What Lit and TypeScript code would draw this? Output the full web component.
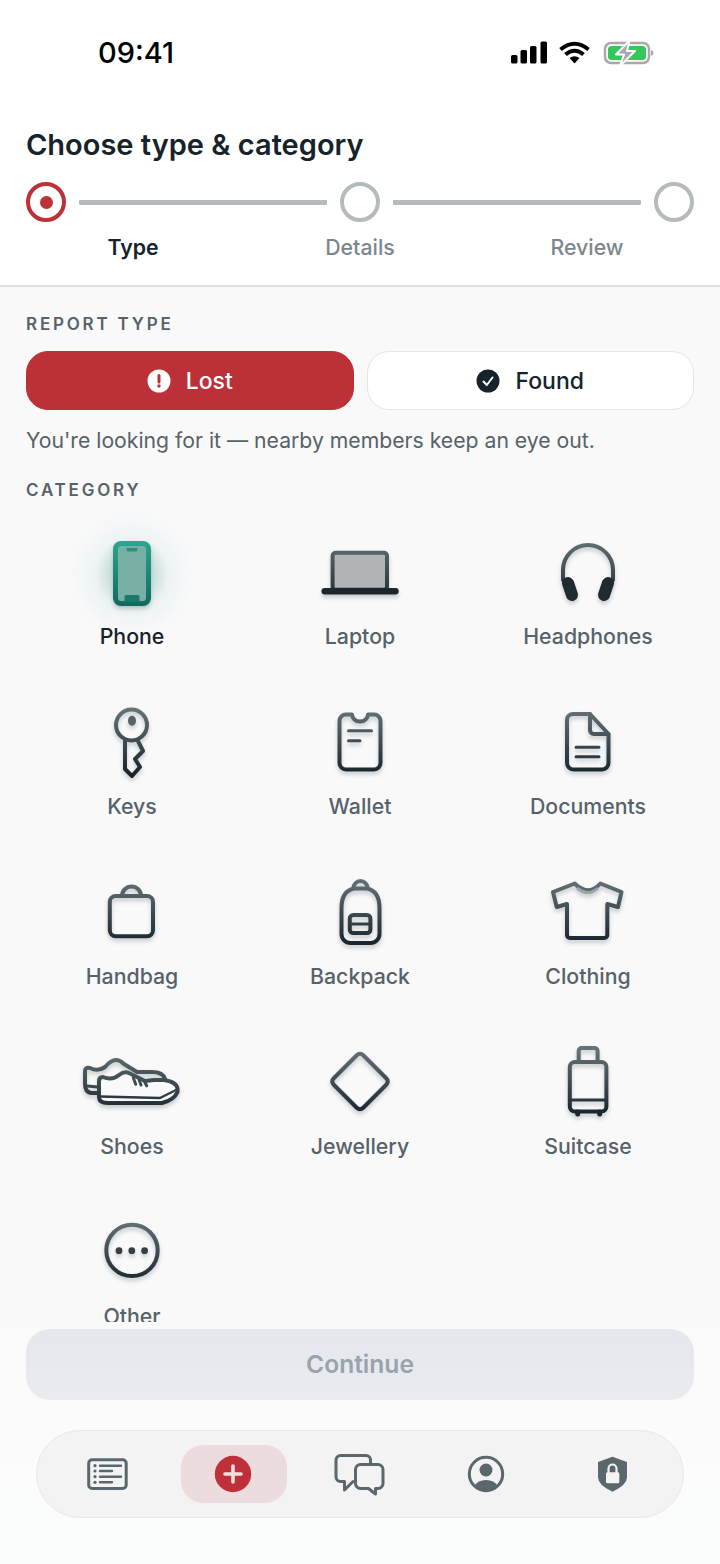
import { LitElement, html, css, svg } from 'lit';
import { customElement } from 'lit/decorators.js';

const STROKE = 'url(#ink)';

const line = (d: string, w = 4) =>
  svg`<path d=${d} fill="none" stroke=${STROKE} stroke-width=${w} stroke-linecap="round" stroke-linejoin="round"/>`;

// every icon is a 100x100 box, its middle sits on the middle of the cell
const ICONS: Record<string, unknown> = {
  phone: svg`
    <circle cx="50" cy="50" r="66" fill="url(#glow)"/>
    <rect x="33.5" y="19.5" width="33" height="60" rx="5.5" fill="#78b0a5" stroke="url(#teal)" stroke-width="5"/>
    <path d="M44.5 24h11v1.5a2 2 0 0 1-2 2h-7a2 2 0 0 1-2-2z" fill="#2a8f80"/>
    <path d="M44 71h12a1.5 1.5 0 0 1 1.5 1.5v5.5h-15v-5.5a1.5 1.5 0 0 1 1.5-1.5z" fill="#1a7a6c"/>`,
  laptop: svg`
    <rect x="22.6" y="28.7" width="54.4" height="37" rx="3" fill="#b0b4b7" stroke=${STROKE} stroke-width="4"/>
    <rect x="11.5" y="64" width="77.2" height="6.5" rx="3.2" fill="#1b272d"/>`,
  headphones: svg`
    ${line('M25 56V46a25 25 0 0 1 50 0v10')}
    <path d="M30 59l4 12M70 59l-4 12" stroke="#1f2b31" stroke-width="12" stroke-linecap="round"/>`,
  keys: svg`
    <circle cx="49.5" cy="31" r="15.5" fill="none" stroke=${STROKE} stroke-width="4"/>
    <ellipse cx="50" cy="26.7" rx="4" ry="5" fill="#55626a"/>
    ${line('M43 47V75L50 82L58 73L53 65L61 57L56 47')}`,
  wallet: svg`
    ${line('M36 20.5H42a8 7 0 0 0 16 0H64a6.5 6.5 0 0 1 6.5 6.5V69a6.5 6.5 0 0 1-6.5 6.5H36a6.5 6.5 0 0 1-6.5-6.5V27a6.5 6.5 0 0 1 6.5-6.5Z')}
    ${line('M38.5 36.7H61.5M38.5 46.7H50', 3)}`,
  documents: svg`
    ${line('M35 20H52L70.5 40V69a6.5 6.5 0 0 1-6.5 6.5H35.5a6.5 6.5 0 0 1-6.5-6.5V26a6 6 0 0 1 6-6Z')}
    ${line('M52 20V36a4 4 0 0 0 4 4H70.5')}
    ${line('M38 53.3H61M38 62.7H61', 3)}`,
  handbag: svg`
    <rect x="27.8" y="32" width="43.2" height="40.3" rx="6" fill="none" stroke=${STROKE} stroke-width="4"/>
    ${line('M40 32a9.5 9.5 0 0 1 19 0')}`,
  backpack: svg`
    ${line('M31.5 44Q31.5 27 44 24.5H57Q69.5 27 69.5 44V70a9 9 0 0 1-9 9H40.5a9 9 0 0 1-9-9Z')}
    ${line('M43.5 24a7 7 0 0 1 14 0', 4)}
    <rect x="39.8" y="51" width="20.6" height="18" rx="3.5" fill="none" stroke=${STROKE} stroke-width="4"/>
    ${line('M40 60H60', 3)}`,
  clothing: svg`
    ${line('M36.7 19.5Q50 33 62.4 19.5L83.5 28L80 43L69.3 40V71a3 3 0 0 1-3 3H32a3 3 0 0 1-3-3V40L18.7 43L15 28Z')}
    <path d="M39 24Q50 33 60 24" fill="none" stroke="#9aa3a8" stroke-width="3"/>`,
  shoes: svg`
    ${line('M16 59H9Q3 58 3 50V37Q3 33 8 34Q16 38 23 33Q29 26 34 26Q38 26 42 30L55 38H70Q81 38 83 45')}
    ${line('M5 52L16 53', 3)}
    <path d="M17 47Q17 43 21 43Q30 47 37 41Q42 37 47 39L63 47L72 46H82Q95 48 95.5 55V58Q92 66 80 69H26Q17 69 17 63Z" fill="#f9f9fa" stroke=${STROKE} stroke-width="4" stroke-linejoin="round"/>
    ${line('M18 62.5L78 64L95 55.5', 2.5)}
    ${line('M51.3 43.7L53.7 50.3M56.8 45L59 51M62 46.5L64.7 51.7', 3)}`,
  jewellery: svg`
    ${line('M46.5 21.5Q50 18 53.5 21.5L76 44Q79.5 47.5 76 51L53.5 73.5Q50 77 46.5 73.5L24 51Q20.5 47.5 24 44Z')}`,
  suitcase: svg`
    <rect x="31.8" y="28" width="36.6" height="49.5" rx="5" fill="none" stroke=${STROKE} stroke-width="4"/>
    ${line('M40.7 28V17a3 3 0 0 1 3-3H56.6a3 3 0 0 1 3 3V28')}
    ${line('M32 66H68', 3)}
    <path d="M39.7 78v2M61.7 78v2" stroke="#1b272d" stroke-width="5" stroke-linecap="round"/>`,
  other: svg`
    <circle cx="50" cy="46.4" r="25.7" fill="none" stroke=${STROKE} stroke-width="4"/>
    <circle cx="37" cy="46.7" r="3.4" fill="#343f46"/>
    <circle cx="49.8" cy="46.7" r="3.4" fill="#343f46"/>
    <circle cx="62.6" cy="46.7" r="3.4" fill="#343f46"/>`,
};

const CATEGORIES = [
  ['phone', 'Phone'], ['laptop', 'Laptop'], ['headphones', 'Headphones'],
  ['keys', 'Keys'], ['wallet', 'Wallet'], ['documents', 'Documents'],
  ['handbag', 'Handbag'], ['backpack', 'Backpack'], ['clothing', 'Clothing'],
  ['shoes', 'Shoes'], ['jewellery', 'Jewellery'], ['suitcase', 'Suitcase'],
  ['other', 'Other'],
];

const NAV = [
  svg`<rect x="10.7" y="15.8" width="37.5" height="28.7" rx="3.5" fill="none" stroke="#5a676d" stroke-width="3"/>
    <path d="M22 21.7H43M22 27H34M22 32.7H43M22 38.3H34" stroke="#5a676d" stroke-width="2.4" stroke-linecap="round"/>
    <circle cx="17" cy="21.7" r="1.6" fill="#5a676d"/><circle cx="17" cy="27" r="1.6" fill="#5a676d"/>
    <circle cx="17" cy="32.7" r="1.6" fill="#5a676d"/><circle cx="17" cy="38.3" r="1.6" fill="#5a676d"/>`,
  svg`<circle cx="29" cy="30" r="18.2" fill="#c0303a"/>
    <path d="M29 22V38M21 30H37" stroke="#f0dfe0" stroke-width="3.6" stroke-linecap="round"/>`,
  svg`<path d="M40.5 19V16a4.5 4.5 0 0 0-4.5-4.5H10.5A4.5 4.5 0 0 0 6 16V33a4.5 4.5 0 0 0 4.5 4.5H14.5V46L23 37.5" fill="none" stroke="#5a676d" stroke-width="3" stroke-linejoin="round" stroke-linecap="round"/>
    <path d="M30.5 20.5H48a5 5 0 0 1 5 5V39.5a5 5 0 0 1-5 5H45.5V50L38.5 44.5H30.5a5 5 0 0 1-5-5V25.5a5 5 0 0 1 5-5Z" fill="none" stroke="#5a676d" stroke-width="3" stroke-linejoin="round"/>`,
  svg`<circle cx="30" cy="30" r="16.7" fill="none" stroke="#5a676d" stroke-width="3"/>
    <ellipse cx="30" cy="26" rx="6.5" ry="6.5" fill="#5a676d"/>
    <path d="M18 42Q22 36 30 36Q38 36 42 42A16.7 16.7 0 0 1 18 42Z" fill="#5a676d"/>`,
  svg`<path d="M30.5 12.7L45 18V33Q45 41 30.5 47.7Q16 41 16 33V18Z" fill="#5a676d"/>
    <rect x="24" y="28.2" width="13.3" height="11" rx="1.5" fill="#f3f3f4"/>
    <path d="M26.5 29V24.5a4 4 0 0 1 8 0V29" fill="none" stroke="#f3f3f4" stroke-width="2.2"/>`,
];

@customElement('app-root')
export class AppRoot extends LitElement {
  static styles = css`
    :host {
      display: flex;
      flex-direction: column;
      width: 720px;
      height: 1564px;
      background: #f9f9fa;
      font-family: Inter, "Liberation Sans", sans-serif;
      color: #17232a;
      overflow: hidden;
    }
    .defs { display: block; width: 0; height: 0; }

    /* status bar */
    .status {
      display: flex;
      align-items: center;
      justify-content: space-between;
      height: 106px;
      padding: 0 66px 0 98px;
      box-sizing: border-box;
    }
    .time { font-size: 29px; font-weight: 500; color: #000; padding-bottom: 2px; }
    .status svg { display: block; }

    /* header */
    .head {
      background: #fff;
      border-bottom: 2px solid #dcdfe1;
    }
    .head-in { padding: 21px 26px 24px; }
    h1 { margin: 0; font-size: 29px; line-height: 36px; font-weight: 600; }
    .stepper { display: flex; align-items: center; margin-top: 19px; }
    .dot {
      width: 40px;
      height: 40px;
      box-sizing: border-box;
      border: 4px solid #b5bbbd;
      border-radius: 50%;
      display: flex;
      align-items: center;
      justify-content: center;
      flex: none;
    }
    .dot.on { border-color: #bc3037; }
    .dot.on::after { content: ""; width: 13px; height: 13px; border-radius: 50%; background: #bc3037; }
    .bar { flex: 1; height: 5px; margin: 0 13px; background: #b5bbbd; border-radius: 1px; }
    .steps {
      display: grid;
      grid-template-columns: repeat(3, 1fr);
      margin: 12px -6.5px 1px;
      text-align: center;
      font-size: 21.3px;
      line-height: 26px;
      font-weight: 500;
      color: #7c878c;
    }
    .steps .on { color: #17232a; font-weight: 600; }

    /* scrolling part */
    .scroll { flex: 1; min-height: 0; overflow: hidden; padding: 27px 26px 0; }
    .caps {
      font-size: 17px;
      line-height: 20px;
      font-weight: 600;
      letter-spacing: 2.8px;
      color: #566269;
    }
    .types { display: grid; grid-template-columns: 1fr 1fr; gap: 13px; margin-top: 17px; }
    .type {
      display: flex;
      align-items: center;
      justify-content: center;
      gap: 15px;
      height: 59px;
      box-sizing: border-box;
      border-radius: 22px;
      font-size: 23px;
      font-weight: 500;
      background: #fff;
      border: 1.5px solid #e4e5e6;
    }
    .type.lost { background: #bc3037; border-color: #bc3037; color: #fff; }
    .hint { margin: 16px 0 0; font-size: 21.2px; line-height: 28px; color: #566269; }
    .cat { margin-top: 26px; }
    .grid {
      display: grid;
      grid-template-columns: repeat(3, 1fr);
      row-gap: 45px;
      margin: 24px -8px 0;
    }
    .cell {
      display: flex;
      flex-direction: column;
      align-items: center;
      font-size: 21.3px;
      line-height: 26px;
      font-weight: 500;
      color: #566269;
    }
    .cell.on { color: #17232a; }
    .cell svg {
      display: block;
      overflow: visible;
      margin-bottom: -1px;
      filter: drop-shadow(0 3px 2px rgba(20, 30, 35, 0.22));
    }

    /* footer */
    .foot { padding: 7px 26px 46px; background: linear-gradient(#fafafa, #fbfcfc); }
    .continue {
      display: flex;
      align-items: center;
      justify-content: center;
      height: 71px;
      box-sizing: border-box;
      padding-bottom: 2px;
      border-radius: 24px;
      background: linear-gradient(#e4e7ec, #e9ebef);
      color: #9aa3ab;
      font-size: 24.6px;
      font-weight: 600;
    }
    .nav {
      display: grid;
      grid-template-columns: repeat(5, 1fr);
      align-items: center;
      height: 88px;
      box-sizing: border-box;
      margin: 30px 10px 0;
      padding: 0 7.5px;
      background: #f3f3f4;
      border: 1.5px solid #e8e8e9;
      border-radius: 44px;
    }
    .item { display: flex; align-items: center; justify-content: center; height: 58px; border-radius: 22px; }
    .item.on { background: #eddcde; margin: 0 10px; }
  `;

  render() {
    return html`
      <svg class="defs" aria-hidden="true">
        <defs>
          <linearGradient id="ink" gradientUnits="userSpaceOnUse" x1="0" y1="15" x2="0" y2="82">
            <stop offset="0" stop-color="#657278"/>
            <stop offset="1" stop-color="#17232a"/>
          </linearGradient>
          <linearGradient id="teal" gradientUnits="userSpaceOnUse" x1="0" y1="17" x2="0" y2="82">
            <stop offset="0" stop-color="#2fa592"/>
            <stop offset="1" stop-color="#0f6a5e"/>
          </linearGradient>
          <radialGradient id="glow">
            <stop offset="0.3" stop-color="#2fa592" stop-opacity="0.22"/>
            <stop offset="0.55" stop-color="#2fa592" stop-opacity="0.05"/>
            <stop offset="1" stop-color="#2fa592" stop-opacity="0"/>
          </radialGradient>
        </defs>
      </svg>
      <div class="head">
        <div class="status">
          <span class="time">09:41</span>
          <svg width="143" height="24" viewBox="0 0 143 24">
            <rect x="0" y="14" width="6.5" height="8.5" rx="1.6"/>
            <rect x="9.5" y="9" width="6.5" height="13.5" rx="1.6"/>
            <rect x="19" y="5" width="6.5" height="17.5" rx="1.6"/>
            <rect x="29.5" y="0.5" width="6.5" height="22" rx="1.6"/>
            <path d="M49.5 8.5Q63.5 -3 77.5 8.5" fill="none" stroke="#000" stroke-width="4"/>
            <path d="M54.5 13.5Q63.5 6 72.5 13.5" fill="none" stroke="#000" stroke-width="4"/>
            <path d="M58.5 17Q63.5 13.5 68.5 17L63.5 22.5Z"/>
            <rect x="94" y="2" width="44" height="20" rx="6" fill="none" stroke="#a9a9a9" stroke-width="2.5"/>
            <rect x="97" y="5" width="38" height="14" rx="3.5" fill="#34c759"/>
            <path d="M140 9v6q2.5-1 2.5-3t-2.5-3Z" fill="#a9a9a9"/>
            <path d="M118.5 -0.5L105 13.5H113L109 25L124 10H116Z" fill="#a9a9a9" stroke="#fff" stroke-width="2" stroke-linejoin="round"/>
          </svg>
        </div>
        <div class="head-in">
          <h1>Choose type &amp; category</h1>
          <div class="stepper">
            <span class="dot on"></span><span class="bar"></span>
            <span class="dot"></span><span class="bar"></span>
            <span class="dot"></span>
          </div>
          <div class="steps">
            <span class="on">Type</span><span>Details</span><span>Review</span>
          </div>
        </div>
      </div>
      <div class="scroll">
        <div class="caps">REPORT TYPE</div>
        <div class="types">
          <div class="type lost">
            <svg width="24" height="24" viewBox="0 0 24 24">
              <circle cx="12" cy="12" r="11.5" fill="#fff"/>
              <path d="M12 6.5V13" stroke="#bc3037" stroke-width="3" stroke-linecap="round"/>
              <circle cx="12" cy="17" r="1.7" fill="#bc3037"/>
            </svg>
            Lost
          </div>
          <div class="type">
            <svg width="24" height="24" viewBox="0 0 24 24">
              <circle cx="12" cy="12" r="11.5" fill="#16232a"/>
              <path d="M7.5 12.5L10.8 16L16.5 8.5" fill="none" stroke="#fff" stroke-width="2" stroke-linecap="round" stroke-linejoin="round"/>
            </svg>
            Found
          </div>
        </div>
        <p class="hint">You're looking for it — nearby members keep an eye out.</p>
        <div class="caps cat">CATEGORY</div>
        <div class="grid">
          ${CATEGORIES.map(([id, label]) => html`
            <div class="cell ${id === 'phone' ? 'on' : ''}">
              <svg width="100" height="100" viewBox="0 0 100 100">${ICONS[id]}</svg>
              ${label}
            </div>`)}
        </div>
      </div>
      <div class="foot">
        <div class="continue">Continue</div>
        <div class="nav">
          ${NAV.map((icon, i) => html`
            <div class="item ${i === 1 ? 'on' : ''}">
              <svg width="60" height="60" viewBox="0 0 60 60">${icon}</svg>
            </div>`)}
        </div>
      </div>
    `;
  }
}
